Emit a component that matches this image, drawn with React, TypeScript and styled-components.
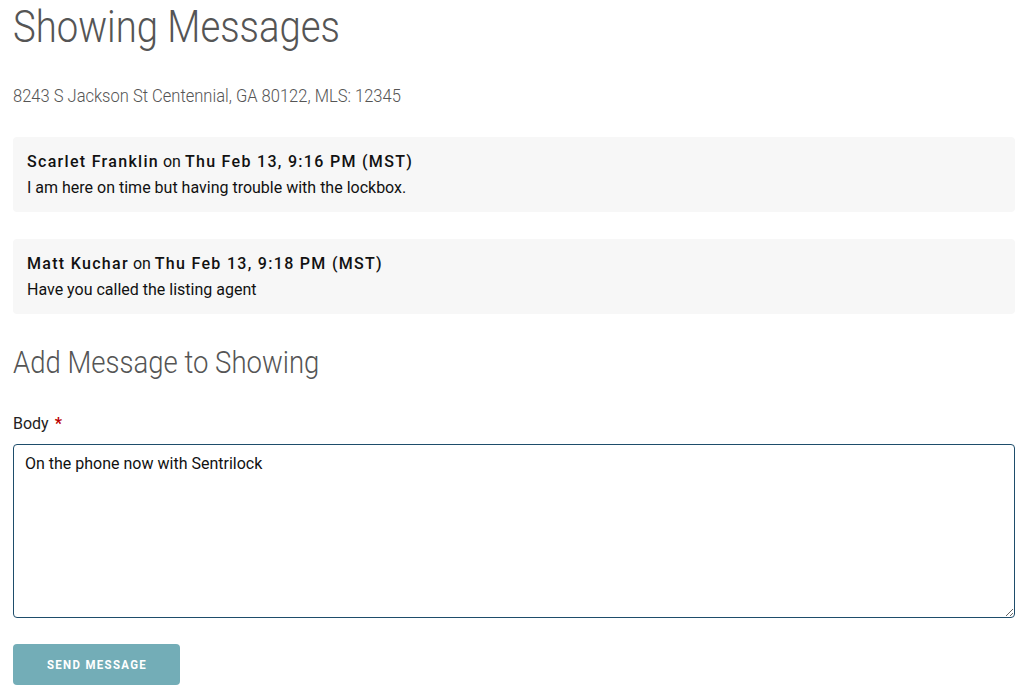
import React from "react";
import styled, { createGlobalStyle } from "styled-components";

const GlobalStyle = createGlobalStyle`
  html, body {
    margin: 0;
    padding: 0;
    background: #fff;
  }
  body {
    font-family: Roboto, "Liberation Sans", sans-serif;
    color: #222;
  }
`;

interface Message {
  author: string;
  time: string;
  body: string;
}

const messages: Message[] = [
  {
    author: "Scarlet Franklin",
    time: "Thu Feb 13, 9:16 PM (MST)",
    body: "I am here on time but having trouble with the lockbox.",
  },
  {
    author: "Matt Kuchar",
    time: "Thu Feb 13, 9:18 PM (MST)",
    body: "Have you called the listing agent",
  },
];

const MessageCard = ({ author, time, body }: Message) => (
  <Card>
    <Meta>
      <Strong>{author}</Strong> on <Strong>{time}</Strong>
    </Meta>
    <Body>{body}</Body>
  </Card>
);

export default function App() {
  return (
    <>
      <GlobalStyle />
      <Page>
        <Title>
          <Narrow>Showing Messages</Narrow>
        </Title>
        <Address>
          <Narrow>8243 S Jackson St Centennial, GA 80122, MLS: 12345</Narrow>
        </Address>
        <List>
          {messages.map((m) => (
            <MessageCard key={m.time} {...m} />
          ))}
        </List>
        <SubTitle>
          <Narrow>Add Message to Showing</Narrow>
        </SubTitle>
        <Form>
          <Label>
            Body <Req>*</Req>
          </Label>
          <TextArea defaultValue="On the phone now with Sentrilock" />
          <Button type="button">
            <Narrow>Send Message</Narrow>
          </Button>
        </Form>
      </Page>
    </>
  );
}

const Page = styled.div`
  padding: 0 9px 0 13px;
  display: flex;
  flex-direction: column;
`;

// stands in for a condensed face (Roboto Condensed is not installed)
const Narrow = styled.span`
  display: inline-block;
  transform: scaleX(0.87);
  transform-origin: left center;
  white-space: nowrap;
`;

const Title = styled.h1`
  margin: 0;
  padding-top: 2px;
  font-family: Roboto, sans-serif;
  font-weight: 300;
  font-size: 44px;
  line-height: 50px;
  color: #555;
`;

const Address = styled.p`
  margin: 32px 0 0;
  font-family: Roboto, sans-serif;
  font-weight: 300;
  font-size: 19px;
  line-height: 24px;
  color: #555;
`;

const List = styled.div`
  margin-top: 29px;
  display: flex;
  flex-direction: column;
  gap: 27px;
`;

const Card = styled.div`
  background: #f7f7f7;
  border-radius: 4px;
  padding: 13px 14px 11px;
  height: 75px;
  box-sizing: border-box;
`;

const Meta = styled.div`
  font-size: 16px;
  line-height: 24px;
  color: #111;
`;

const Strong = styled.span`
  font-weight: 500;
  letter-spacing: 1.3px;
`;

const Body = styled.div`
  font-size: 16px;
  line-height: 27px;
  color: #111;
`;

const SubTitle = styled.h2`
  margin: 28px 0 0;
  font-family: Roboto, sans-serif;
  font-weight: 300;
  font-size: 32px;
  line-height: 40px;
  color: #555;

  ${Narrow} {
    transform: scaleX(0.86);
  }
`;

const Form = styled.form`
  margin-top: 32px;
  display: flex;
  flex-direction: column;
`;

const Label = styled.label`
  font-size: 16px;
  line-height: 20px;
  color: #222;
`;

const Req = styled.span`
  color: #b00;
  font-weight: 700;
  margin-left: 2px;
`;

const TextArea = styled.textarea`
  margin-top: 10px;
  height: 174px;
  box-sizing: border-box;
  border: 1px solid #1e4d6b;
  border-radius: 4px;
  padding: 8px 11px;
  font-family: Roboto, sans-serif;
  font-size: 16px;
  line-height: 22px;
  color: #111;
  outline: none;
  resize: vertical;
`;

const Button = styled.button`
  margin-top: 26px;
  align-self: flex-start;
  width: 167px;
  height: 41px;
  padding: 0 0 0 34px;
  text-align: left;
  border: none;
  border-radius: 4px;
  background: #73adb7;
  color: #fff;
  font-family: Roboto, sans-serif;
  font-weight: 700;
  font-size: 13px;
  letter-spacing: 1.5px;
  text-transform: uppercase;
  cursor: pointer;

  ${Narrow} {
    transform: scaleX(0.88);
  }
`;
